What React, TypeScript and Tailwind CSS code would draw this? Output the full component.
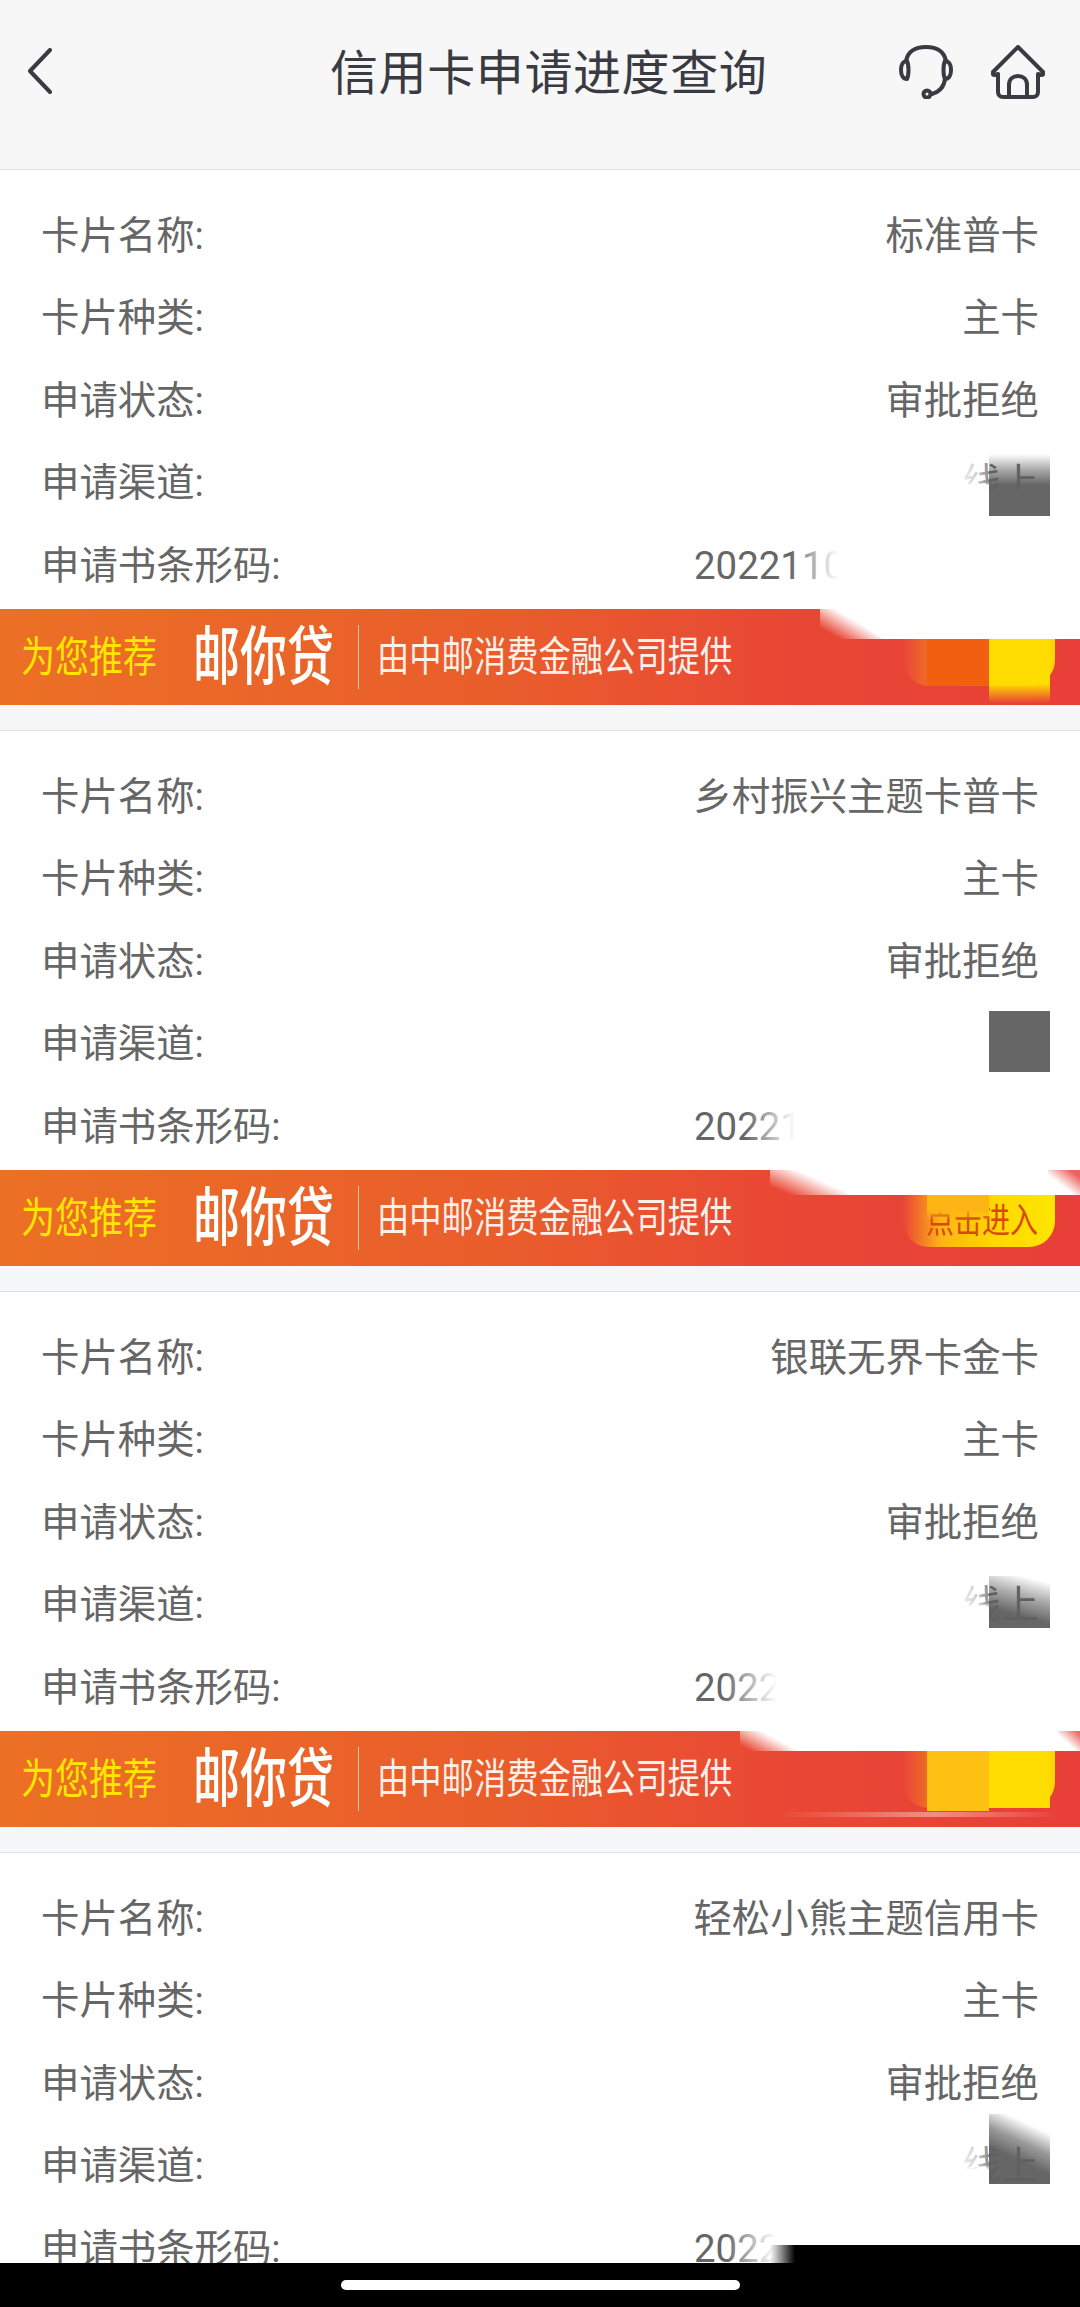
const cards = [
  {
    name: "标准普卡",
    code: "2022110",
    showChannel: true,
    hasBanner: true,
    block: "top-[284px] h-[62px] bg-[linear-gradient(180deg,#ffffff_0%,#aaa_25%,#666_50%)]",
    blockCover: "top-[314px] h-[32px] bg-[linear-gradient(180deg,#66666600,#666_30%)]",
    textFade: "top-[284px] h-[62px] bg-[linear-gradient(180deg,#ffffff00_47%,#fff_50%),linear-gradient(90deg,#ffffff_10%,#ffffffb0_70%,#ffffff40)]",
    codeFade: "left-[790px] top-[354px] h-[85px] bg-[linear-gradient(90deg,#ffffff00,#fff_48px)]",
    strip: "left-[820px] h-[30px] bg-[linear-gradient(31deg,#ffffff00_10px,#fff_34px)]",
    corner: "hidden",
    pillKind: "glow",
    pillClip: "top-[30px] h-[47px]",
    patchLeft: "top-[30px] h-[47px] bg-[#f0600f]",
    patchRight: "top-[30px] h-[64px] bg-[linear-gradient(180deg,#ffdd00_70%,#ffdd0000)]",
    glow: false,
  },
  {
    name: "乡村振兴主题卡普卡",
    code: "20221",
    showChannel: false,
    hasBanner: true,
    block: "top-[280px] h-[61px] bg-[#666]",
    blockCover: "hidden",
    textFade: "hidden",
    codeFade: "left-[745px] top-[354px] h-[85px] bg-[linear-gradient(90deg,#ffffff00,#fff_50px)]",
    strip: "left-[770px] h-[25px] bg-[linear-gradient(24deg,#ffffff00_8px,#fff_34px)]",
    corner: "w-[32px] h-[25px] bg-[linear-gradient(to_top_right,#e83f3800_40%,#e83f38d0_85%)]",
    pillKind: "button",
    pillClip: "top-[25px] h-[52px]",
    patchLeft: "top-[25px] h-[25px] bg-[linear-gradient(180deg,#fdb515_60%,#fdb51500)]",
    patchRight: "hidden",
    glow: false,
  },
  {
    name: "银联无界卡金卡",
    code: "2022",
    showChannel: true,
    hasBanner: true,
    block: "top-[284px] h-[52px] bg-[linear-gradient(195deg,#ffffff_10%,#aaa_40%,#666_70%)]",
    blockCover: "hidden",
    textFade: "top-[284px] h-[52px] bg-[linear-gradient(180deg,#ffffff00_52%,#fff_60%),linear-gradient(90deg,#ffffff_10%,#ffffffb0_70%,#ffffff40)]",
    codeFade: "left-[722px] top-[354px] h-[85px] bg-[linear-gradient(90deg,#ffffff00,#fff_55px)]",
    strip: "left-[740px] h-[20px] bg-[linear-gradient(28deg,#ffffff00_5px,#fff_28px)]",
    corner: "w-[22px] h-[20px] bg-[linear-gradient(to_top_right,#e83f3800_40%,#e83f38c0_90%)]",
    pillKind: "glow",
    pillClip: "top-[20px] h-[57px]",
    patchLeft: "top-[20px] h-[60px] bg-[#fec012]",
    patchRight: "top-[20px] h-[57px] bg-[#ffdd00]",
    glow: true,
  },
  {
    name: "轻松小熊主题信用卡",
    code: "2022",
    showChannel: true,
    hasBanner: false,
    block: "top-[261px] h-[70px] bg-[linear-gradient(205deg,#ffffff_20%,#999_42%,#666_62%)]",
    blockCover: "hidden",
    textFade: "top-[284px] h-[47px] bg-[linear-gradient(180deg,#ffffff00_60%,#fff_70%),linear-gradient(90deg,#ffffff_10%,#ffffffb0_70%,#ffffff40)]",
    codeFade: "left-[725px] top-[354px] h-[85px] bg-[linear-gradient(90deg,#ffffff00,#fff_50px)]",
    strip: "hidden",
    corner: "hidden",
    pillKind: "none",
    pillClip: "hidden",
    patchLeft: "hidden",
    patchRight: "hidden",
    glow: false,
  },
];

function Row({ label, value, raised }: { label: string; value: string; raised?: boolean }) {
  return (
    <div className="flex h-[82.4px] items-center justify-between px-[41px]">
      <span>{label}</span>
      <span className={raised ? "relative z-20 text-[#606060]" : ""}>{value}</span>
    </div>
  );
}

function Banner({ c }: { c: (typeof cards)[number] }) {
  return (
    <div className="relative h-[96px] overflow-hidden bg-[linear-gradient(90deg,#ec7025,#e95c2c_48%,#e94835_72%,#e83f38)] pl-[21px] text-white">
      <div className="flex h-full items-center">
        <span className="w-[172px] scale-y-[1.25] text-[34px] leading-none text-[#ffe600]">为您推荐</span>
        <span className="w-[165px] scale-y-[1.35] text-[47px] font-medium leading-none">邮你贷</span>
        <span className="h-[64px] w-px bg-[#f6c0a8]" />
        <span className="ml-[18px] scale-y-[1.25] text-[32.3px] leading-none text-[#fff0ea]">由中邮消费金融公司提供</span>
      </div>

      <div className={`absolute left-[903px] w-[152px] overflow-hidden rounded-b-[26px] ${c.pillClip}`}>
        {c.pillKind === "button" && (
          <div className="flex h-full items-center justify-center bg-[linear-gradient(90deg,#e9483500,#fdb515_25%,#ffd800_60%,#ffe600)] pl-[6px] pt-[2px] text-[28px] leading-none text-[#d9480f]">
            <span className="scale-y-[1.25]">点击进入</span>
          </div>
        )}
        {c.pillKind === "glow" && (
          <div className="h-full bg-[linear-gradient(90deg,#e9483500,#f7a60f_40%,#ffd800)]" />
        )}
      </div>
      <div className={`absolute left-[927px] w-[62px] ${c.patchLeft}`} />
      <div className={`absolute left-[989px] w-[61px] ${c.patchRight}`} />
      {c.glow && (
        <div className="absolute bottom-[10px] left-[780px] right-[20px] h-[5px] bg-[linear-gradient(90deg,#ffffff00,#ffffff66_55%,#ffffff00)]" />
      )}
      <div className={`absolute right-0 top-0 ${c.strip}`} />
      <div className={`absolute right-0 top-0 ${c.corner}`} />
    </div>
  );
}

function Card({ c }: { c: (typeof cards)[number] }) {
  return (
    <section className="relative h-[561px] border-t border-[#e2e2e2] bg-[#f6f7f8]">
      <div className="bg-white pb-[2px] pt-[25px] text-[38.4px] leading-none text-[#666]">
        <Row label="卡片名称:" value={c.name} />
        <Row label="卡片种类:" value="主卡" />
        <Row label="申请状态:" value="审批拒绝" />
        <Row label="申请渠道:" value={c.showChannel ? "线上" : ""} raised />
        <div className="flex h-[82.4px] items-center justify-between px-[41px]">
          <span>申请书条形码:</span>
          <span className="w-[345px]">{c.code}</span>
        </div>
      </div>

      {c.hasBanner && <Banner c={c} />}

      <div className={`absolute left-[989px] z-10 w-[61px] ${c.block}`} />
      <div className={`absolute left-[950px] z-30 w-[39px] ${c.textFade}`} />
      <div className={`absolute left-[989px] z-30 w-[61px] ${c.blockCover}`} />
      <div className={`absolute right-0 ${c.codeFade}`} />
    </section>
  );
}

export default function App() {
  return (
    <div className="relative h-[2307px] w-[1080px] overflow-hidden bg-[#f6f7f8] font-['Roboto','Noto_Sans_CJK_SC',sans-serif]">
      <header className="flex h-[169px] items-start bg-[#f7f7f8] pl-[27px] pt-[45px] text-[#3a3a42]">
        <svg className="mt-[3px] h-[46px] w-[303px]" viewBox="0 0 303 46" fill="none" stroke="currentColor" strokeWidth="4" strokeLinecap="round" strokeLinejoin="round">
          <path d="M23 2 L3 23 L23 44" />
        </svg>
        <h1 className="mt-[1px] w-[435px] whitespace-nowrap text-[48px] font-normal leading-[56px] tracking-[0.6px]">信用卡申请进度查询</h1>
        <div className="ml-[134px] flex gap-[38px]">
          <svg className="h-[54px] w-[54px]" viewBox="0 0 54 54" fill="none" stroke="currentColor" strokeWidth="4" strokeLinecap="round" strokeLinejoin="round">
            <path d="M7 16 C9 6 17 2 27 2 C37 2 45 6 47 16" />
            <path d="M8 16 C4 16 2 20 2 25 C2 30 4 34 8 34 C10 30 10 20 8 16 Z" />
            <path d="M46 16 C50 16 52 20 52 25 C52 30 50 34 46 34 C44 30 44 20 46 16 Z" />
            <path d="M46 34 C45 42 40 47 33 49" />
            <circle cx="28" cy="49" r="3.5" />
          </svg>
          <svg className="h-[54px] w-[54px]" viewBox="0 0 54 54" fill="none" stroke="currentColor" strokeWidth="4" strokeLinecap="round" strokeLinejoin="round">
            <path d="M27 2 L2 27 C1 29 2 30 4 30 L7 29 L7 47 C7 50 9 52 12 52 L42 52 C45 52 47 50 47 47 L47 29 L50 30 C52 30 53 29 52 27 Z" />
            <path d="M18 52 L18 40 C18 34 22 31 27 31 C32 31 36 34 36 40 L36 52" />
          </svg>
        </div>
      </header>

      {cards.map((c) => (
        <Card key={c.name} c={c} />
      ))}

      <div className="absolute left-[770px] right-0 top-[2245px] h-[18px] bg-[linear-gradient(90deg,#00000000,#000_25px)]" />
      <footer className="absolute inset-x-0 bottom-0 flex h-[44px] items-start justify-center bg-black pt-[17px]">
        <div className="h-[10px] w-[399px] rounded-full bg-white" />
      </footer>
    </div>
  );
}
